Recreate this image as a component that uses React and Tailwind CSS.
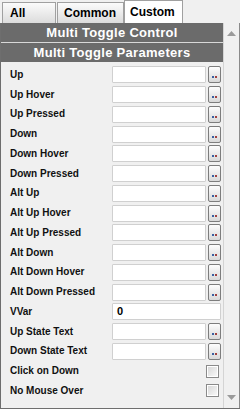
import React from "react";

const rows = [
  { label: "Up", type: "file" },
  { label: "Up Hover", type: "file" },
  { label: "Up Pressed", type: "file" },
  { label: "Down", type: "file" },
  { label: "Down Hover", type: "file" },
  { label: "Down Pressed", type: "file" },
  { label: "Alt Up", type: "file" },
  { label: "Alt Up Hover", type: "file" },
  { label: "Alt Up Pressed", type: "file" },
  { label: "Alt Down", type: "file" },
  { label: "Alt Down Hover", type: "file" },
  { label: "Alt Down Pressed", type: "file" },
  { label: "VVar", type: "text", value: "0" },
  { label: "Up State Text", type: "file" },
  { label: "Down State Text", type: "file" },
  { label: "Click on Down", type: "check" },
  { label: "No Mouse Over", type: "check" },
];

function DotsButton() {
  return (
    <div className="w-[13px] h-[17px] ml-[2px] rounded-[2px] border border-[#7d7d7d] bg-gradient-to-b from-[#fdfdfd] to-[#d9d9d9] flex items-end justify-center pb-[4px] gap-[1px]">
      <span className="w-[2px] h-[2px] bg-[#3a5fa0]" />
      <span className="w-[2px] h-[2px] bg-[#a04040]" />
    </div>
  );
}

function Row({ row }) {
  return (
    <div className="h-[19.75px] flex items-center pl-[9px] pr-[2px]">
      <div className="w-[102px] text-[10px] font-bold text-[#111] leading-none whitespace-nowrap">
        {row.label}
      </div>
      {row.type === "file" && (
        <div className="flex items-center">
          <div className="w-[94px] h-[17px] bg-white border border-[#d0d0d0] rounded-[1px]" />
          <DotsButton />
        </div>
      )}
      {row.type === "text" && (
        <div className="w-[109px] h-[17px] bg-white border border-[#d0d0d0] rounded-[1px] flex items-center pl-[4px] text-[11px] font-bold text-black leading-none">
          {row.value}
        </div>
      )}
      {row.type === "check" && (
        <div className="flex-1 flex justify-end pr-[2px]">
          <div className="w-[13px] h-[13px] border border-[#8a8a8a] bg-white p-[1px]">
            <div className="w-full h-full bg-gradient-to-br from-[#d8d8d8] to-[#f8f8f8]" />
          </div>
        </div>
      )}
    </div>
  );
}

export default function App() {
  return (
    <div
      className="w-[240px] h-[409px] bg-[#f0f0f0] overflow-hidden flex flex-col"
      style={{ fontFamily: '"Liberation Sans", Arial, sans-serif' }}
    >
      <div className="h-[23px] flex items-end pl-[2px] shrink-0">
        <div className="w-[54px] h-[21px] border border-[#a0a0a0] border-b-0 bg-gradient-to-b from-[#fbfbfb] to-[#dcdcdc] flex items-center pl-[7px] text-[12px] font-bold text-black">
          All
        </div>
        <div className="w-[67px] h-[21px] ml-[1px] border border-[#a0a0a0] border-b-0 bg-gradient-to-b from-[#fbfbfb] to-[#dcdcdc] flex items-center pl-[6px] text-[12px] font-bold text-black">
          Common
        </div>
        <div className="w-[59px] h-[23px] border border-[#a0a0a0] border-b-0 bg-white flex items-center pl-[5px] text-[12px] font-bold text-black">
          Custom
        </div>
      </div>
      <div className="flex flex-1 border-l border-b border-[#6e6e6e]">
        <div className="w-[222px] flex flex-col">
          <div className="h-[19px] bg-[#6b6b6b] text-white text-[13px] font-bold flex items-center justify-center tracking-[0.3px]">
            Multi Toggle Control
          </div>
          <div className="h-[20px] bg-[#6b6b6b] border-t border-[#d8d8d8] text-white text-[13px] font-bold flex items-center justify-center tracking-[0.3px]">
            Multi Toggle Parameters
          </div>
          <div className="pt-[3px]">
            {rows.map((r) => (
              <Row key={r.label} row={r} />
            ))}
          </div>
        </div>
        <div className="w-[17px] border-l border-r border-[#d4d4d4] border-r-[#8a8a8a] bg-[#f0f0f0] flex flex-col justify-between items-center py-[8px]">
          <svg width="9" height="5" viewBox="0 0 9 5">
            <path d="M4.5 0 L9 5 L0 5 Z" fill="#9a9a9a" />
          </svg>
          <svg width="9" height="5" viewBox="0 0 9 5">
            <path d="M0 0 L9 0 L4.5 5 Z" fill="#9a9a9a" />
          </svg>
        </div>
      </div>
    </div>
  );
}
